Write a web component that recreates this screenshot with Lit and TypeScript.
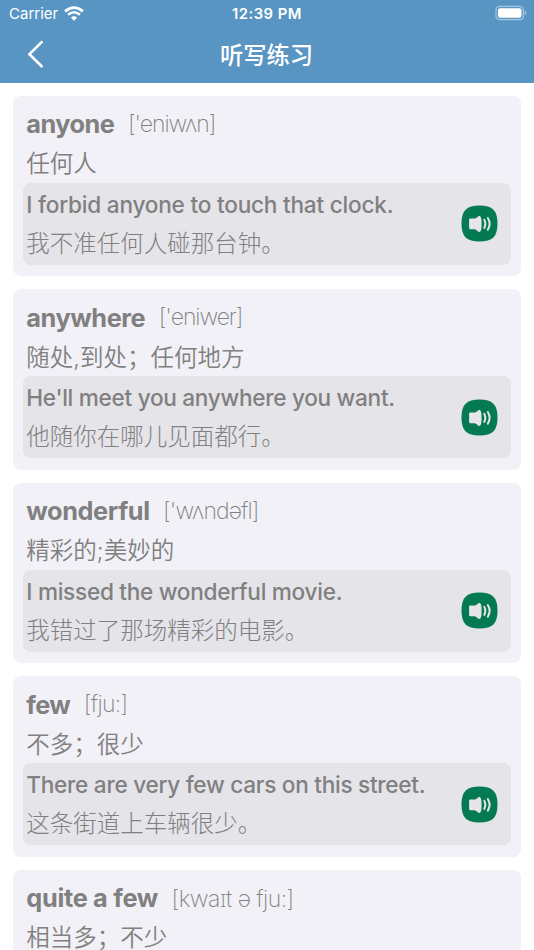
import { LitElement, html, css, svg, nothing } from "lit";
import { customElement, property } from "lit/decorators.js";
import { styleMap } from "lit/directives/style-map.js";

interface Entry {
  word: string;
  phonetic: string;
  meaning: string;
  sentence?: string;
  translation?: string;
  tracking: [number, number, number];
}

const entries: Entry[] = [
  { word: "anyone", phonetic: "['eniwʌn]", meaning: "任何人", sentence: "I forbid anyone to touch that clock.", translation: "我不准任何人碰那台钟。", tracking: [-0.5, -1.05, -0.22] },
  { word: "anywhere", phonetic: "['eniwer]", meaning: "随处,到处；任何地方", sentence: "He'll meet you anywhere you want.", translation: "他随你在哪儿见面都行。", tracking: [-0.42, -1.05, -0.29] },
  { word: "wonderful", phonetic: "['wʌndəfl]", meaning: "精彩的;美妙的", sentence: "I missed the wonderful movie.", translation: "我错过了那场精彩的电影。", tracking: [-0.4, -0.9, -0.28] },
  { word: "few", phonetic: "[fju:]", meaning: "不多；很少", sentence: "There are very few cars on this street.", translation: "这条街道上车辆很少。", tracking: [-0.6, -0.65, -0.28] },
  { word: "quite a few", phonetic: "[kwaɪt ə fju:]", meaning: "相当多；不少", tracking: [-0.3, -0.54, 0] },
];

const speakerIcon = svg`
  <path d="M18.5 0.5C31.5 0.5 36.5 5.5 36.5 18.5S31.5 36.5 18.5 36.5S0.5 31.5 0.5 18.5S5.5 0.5 18.5 0.5Z" fill="#047a52"/>
  <path d="M9.2 13.6H13.6C15.8 13.4 16.2 11.2 18.2 10.9C19.9 10.9 20.6 12.8 20.6 18.7S19.9 26.9 18.2 26.9C16.2 26.6 15.8 24.4 13.6 24.2H9.2Q8.1 24.2 8.1 23.1V14.7Q8.1 13.6 9.2 13.6Z" fill="#e5e5ea"/>
  <path d="M23.3 14.9Q25.3 18.7 23.3 22.9M26.8 13Q30.4 18.7 26.8 24.7" fill="none" stroke="#e5e5ea" stroke-width="2" stroke-linecap="round"/>`;

@customElement("word-card")
export class WordCard extends LitElement {
  @property({ attribute: false }) entry!: Entry;

  static styles = css`
    :host {
      display: block;
      box-sizing: border-box;
      height: 180.5px;
      padding: 8.8px 10.5px 0 10.3px;
      border-radius: 8px;
      background: #f2f1f7;
      color: #808080;
      white-space: nowrap;
      font-family: Inter, "Noto Sans CJK SC", sans-serif;
    }
    .head, .meaning, .sentence, .translation {
      display: flex;
      align-items: center;
      padding-left: 3px;
    }
    .head { height: 38.5px; gap: 13.5px; }
    .word { font-size: 25.3px; font-weight: 700; }
    .phonetic {
      font-size: 23px;
      font-weight: 200;
      font-family: Inter, "Noto Sans", "Noto Sans CJK SC", sans-serif;
    }
    .meaning { height: 38.8px; font-size: 23.5px; font-weight: 350; padding-bottom: 1.2px; }
    .example {
      display: flex;
      align-items: center;
      justify-content: space-between;
      box-sizing: border-box;
      height: 81.7px;
      padding-right: 12.5px;
      border-radius: 8px;
      background: #e5e4e9;
    }
    .sentence { height: 38.6px; font-size: 22.6px; font-weight: 500; }
    .translation { height: 35.8px; font-size: 23.5px; font-weight: 300; padding-bottom: 2.8px; }
    .speaker { display: block; width: 37px; height: 37px; flex: none; }
  `;

  render() {
    const { word, phonetic, meaning, sentence, translation, tracking } = this.entry;
    const track = (i: number) => styleMap({ letterSpacing: `${tracking[i]}px` });
    return html`
      <div class="head">
        <span class="word" style=${track(0)}>${word}</span>
        <span class="phonetic" style=${track(1)}>${phonetic}</span>
      </div>
      <div class="meaning">${meaning}</div>
      ${sentence
        ? html`<div class="example">
            <div>
              <div class="sentence" style=${track(2)}>${sentence}</div>
              <div class="translation">${translation}</div>
            </div>
            <svg class="speaker" viewBox="0 0 37 37">${speakerIcon}</svg>
          </div>`
        : nothing}
    `;
  }
}

@customElement("app-root")
export class AppRoot extends LitElement {
  static styles = css`
    :host {
      display: flex;
      flex-direction: column;
      height: 950px;
      overflow: hidden;
      background: #fff;
      font-family: Inter, "Noto Sans CJK SC", sans-serif;
    }
    .top { flex: none; height: 82.6px; background: #5895c3; color: #fff; }
    .status {
      display: grid;
      grid-template-columns: 1fr auto 1fr;
      align-items: center;
      height: 27px;
      padding: 0 8px 0 9px;
      font-size: 15px;
    }
    .carrier { display: flex; align-items: center; gap: 6px; }
    .time { font-size: 14.8px; font-weight: 570; letter-spacing: 0.5px; margin-right: 1px; }
    .wifi { width: 20px; height: 15px; margin-top: -1px; }
    .battery { width: 32px; height: 16px; justify-self: end; margin-right: -1px; margin-top: -1px; }
    .nav {
      display: grid;
      grid-template-columns: 1fr auto 1fr;
      align-items: center;
      height: 54px;
      padding: 0 27px;
    }
    .back { width: 18px; height: 30px; }
    .title { font-size: 23.3px; font-weight: 500; padding: 0 1px 1px 0; }
    .list {
      display: flex;
      flex-direction: column;
      gap: 13px;
      padding: 13px 13px 0;
    }
    .list > * { flex: none; }
  `;

  render() {
    return html`
      <div class="top">
        <div class="status">
          <div class="carrier">
            <span>Carrier</span>
            <svg class="wifi" viewBox="0 0 20 15">
              <path d="M1.1 5.4Q10 -2.2 18.9 5.4" fill="none" stroke="#fff" stroke-width="2.7"/>
              <path d="M4.1 8.8Q10 3.8 15.9 8.8" fill="none" stroke="#fff" stroke-width="2.5"/>
              <path d="M6.8 11.6Q10 8.8 13.2 11.6L10 14.8Z" fill="#fff"/>
            </svg>
          </div>
          <span class="time">12:39 PM</span>
          <svg class="battery" viewBox="0 0 32 16">
            <rect x="1" y="1.3" width="27.4" height="13.4" rx="3.8" fill="none" stroke="#fff" stroke-opacity=".45" stroke-width="1.3"/>
            <rect x="3" y="3.3" width="23.5" height="9.4" rx="2" fill="#fff"/>
            <path d="M29.8 5.8Q31.4 6.4 31.4 8T29.8 10.2Z" fill="#fff" fill-opacity=".5"/>
          </svg>
        </div>
        <div class="nav">
          <svg class="back" viewBox="0 0 18 30">
            <path d="M15.4 2.4L2.4 15.2L15.4 28" fill="none" stroke="#fff" stroke-width="2.6"/>
          </svg>
          <span class="title">听写练习</span>
        </div>
      </div>
      <div class="list">
        ${entries.map((entry) => html`<word-card .entry=${entry}></word-card>`)}
      </div>
    `;
  }
}
